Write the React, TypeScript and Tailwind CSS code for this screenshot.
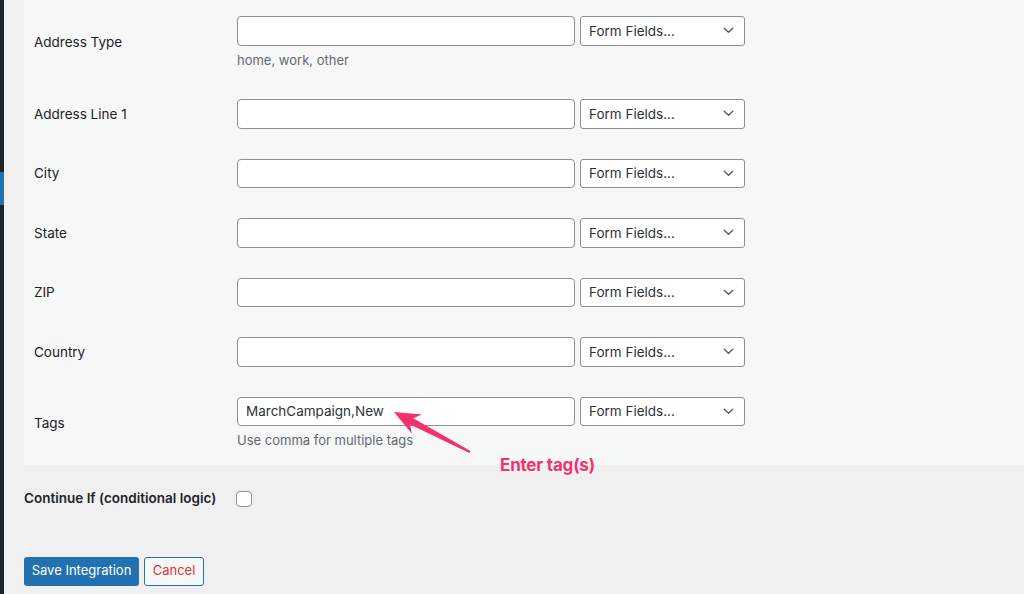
import React from 'react';

interface FieldRow {
  label: string;
  value?: string;
  help?: string;
}

const rows: FieldRow[] = [
  { label: 'Address Type', help: 'home, work, other' },
  { label: 'Address Line 1' },
  { label: 'City' },
  { label: 'State' },
  { label: 'ZIP' },
  { label: 'Country' },
  { label: 'Tags', value: 'MarchCampaign,New', help: 'Use comma for multiple tags' },
];

function Chevron() {
  return (
    <svg width="11" height="7" viewBox="0 0 11 7" fill="none" className="text-[#50575e]">
      <path d="M1.25 1.25 5.5 5.25 9.75 1.25" stroke="currentColor" strokeWidth="1.3" strokeLinecap="round" strokeLinejoin="round" />
    </svg>
  );
}

function FormFieldsSelect() {
  return (
    <div className="flex h-[29.5px] w-[165px] items-center justify-between rounded-[3px] border border-[#8c8f94] bg-white pl-[8px] pr-[10px] text-[13.5px] text-[#2c3338]">
      <span>Form Fields...</span>
      <Chevron />
    </div>
  );
}

function Row({ row }: { row: FieldRow }) {
  return (
    <div className="flex items-center py-[15px]">
      <div className="w-[203px] text-[13.5px] text-[#1d2327]">{row.label}</div>
      <div className="flex flex-col">
        <div className="flex gap-[5px]">
          <div className="flex h-[29.5px] w-[338px] items-center rounded-[4px] border border-[#8c8f94] bg-white px-[8px] text-[13.5px] text-[#2c3338]">
            {row.value}
          </div>
          <FormFieldsSelect />
        </div>
        {row.help && (
          <p className="mt-[6px] text-[13px] leading-[17.5px] text-[#646970]">{row.help}</p>
        )}
      </div>
    </div>
  );
}

export default function App() {
  return (
    <div className="relative flex h-[594px] w-full overflow-hidden bg-[#f0f0f1] font-['Inter','Liberation_Sans',sans-serif]">
      {/* admin menu edge */}
      <div className="w-[4px] shrink-0 bg-[#1d2327] pt-[172px]">
        <div className="h-[33px] bg-[#2271b1]" />
      </div>

      <main className="flex-1 pl-[20px]">
        <div className="bg-[#f6f7f7] pl-[10px] pt-px">
          {rows.map((row) => (
            <Row key={row.label} row={row} />
          ))}
        </div>

        <div className="flex h-[68px] items-center">
          <div className="w-[212px] text-[13.5px] font-semibold text-[#1d2327]">
            Continue If (conditional logic)
          </div>
          <div className="h-[16px] w-[16px] rounded-[4px] border border-[#8c8f94] bg-white" />
        </div>

        <div className="mt-[24px] flex gap-[5px]">
          <button className="h-[29px] w-[115px] rounded-[3px] bg-[#2271b1] text-[13px] text-white">
            Save Integration
          </button>
          <button className="h-[29px] w-[60px] rounded-[3px] border border-[#2271b1] bg-[#f6f7f7] text-[13px] text-[#d63638]">
            Cancel
          </button>
        </div>
      </main>

      {/* annotation */}
      <svg className="pointer-events-none absolute left-0 top-0" width="1024" height="594" viewBox="0 0 1024 594">
        <polygon
          points="394,412 422.1,414.4 413.3,418.2 470.5,451.1 469.5,452.9 410.1,424.4 411.9,433.8"
          fill="#f5306d"
        />
      </svg>
      <div className="pointer-events-none absolute left-[500px] top-[453px] text-[17px] font-bold tracking-[-0.2px] text-[#f5306d] [text-shadow:0_0_2px_#fff,0_0_1px_#fff]">
        Enter tag(s)
      </div>
    </div>
  );
}
